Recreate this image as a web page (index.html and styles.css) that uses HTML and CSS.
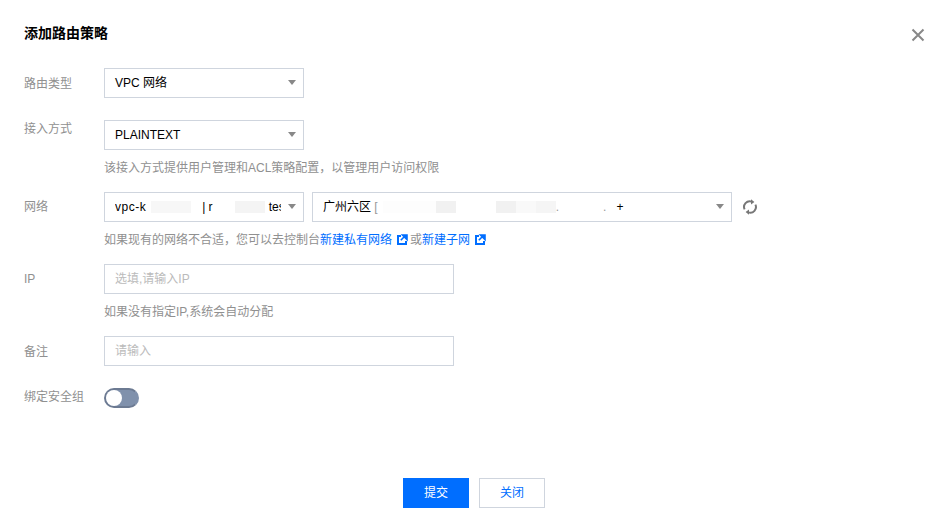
FILE: index.html
```html
<!DOCTYPE html>
<html lang="zh-CN">
<head>
<meta charset="utf-8">
<title>添加路由策略</title>
<link rel="stylesheet" href="styles.css">
</head>
<body>
<div class="dialog">
  <header class="head">
    <h1 class="title">添加路由策略</h1>
    <svg class="close" width="14" height="14" viewBox="0 0 14 14"><path d="M1.5 1.5l11 11M12.5 1.5l-11 11" stroke="#888" stroke-width="2" fill="none"/></svg>
  </header>
  <form class="form">
    <div class="row">
      <div class="label label-low">路由类型</div>
      <div class="body">
        <div class="select w200"><span class="val">VPC 网络</span><i class="arrow"></i></div>
      </div>
    </div>
    <div class="row has-help">
      <div class="label label-top">接入方式</div>
      <div class="body">
        <div class="select w200"><span class="val">PLAINTEXT</span><i class="arrow"></i></div>
        <p class="help">该接入方式提供用户管理和ACL策略配置，以管理用户访问权限</p>
      </div>
    </div>
    <div class="row has-help">
      <div class="label">网络</div>
      <div class="body">
        <div class="net">
          <div class="select w200">
            <span class="val clip"><span class="wide">vpc-k</span><b class="blur b1"></b><b class="gap g1"></b>| r<b class="gap g2"></b><b class="blur b2"></b><b class="gap g3"></b>tes</span><i class="arrow"></i>
          </div>
          <div class="select w420">
            <span class="val">广州六区 <span class="faint">[</span><b class="blur b3"></b><b class="blur b4"></b><b class="gap g4"></b><b class="blur b5"></b><b class="blur b6"></b><b class="blur b7"></b><span class="faint">.</span><b class="gap g5"></b><span class="faint">.</span><b class="gap g6"></b>+</span><i class="arrow"></i>
          </div>
          <svg class="refresh" width="16" height="16" viewBox="0 0 16 16"><g fill="none" stroke="#777" stroke-width="2"><path d="M2.6 10.4A5.7 5.7 0 0 1 9.6 2.6"/><path d="M13.4 5.6A5.7 5.7 0 0 1 6.4 13.4"/></g><path d="M9 .3l3.4 2.7L9 5.4zM7 10.6L3.6 13 7 15.7z" fill="#777"/></svg>
        </div>
        <p class="help">如果现有的网络不合适，您可以去控制台<a class="link">新建私有网络<svg class="ext" width="12" height="12" viewBox="0 0 12 12"><path d="M5 2H2v8h8V7" fill="none" stroke="#006eff" stroke-width="2"/><path d="M6.5 1H11v4.5zM8.5 2.5L4.8 6.2" fill="#006eff" stroke="#006eff" stroke-width="1.6"/></svg></a>或<a class="link">新建子网<svg class="ext" width="12" height="12" viewBox="0 0 12 12"><path d="M5 2H2v8h8V7" fill="none" stroke="#006eff" stroke-width="2"/><path d="M6.5 1H11v4.5zM8.5 2.5L4.8 6.2" fill="#006eff" stroke="#006eff" stroke-width="1.6"/></svg></a></p>
      </div>
    </div>
    <div class="row has-help">
      <div class="label">IP</div>
      <div class="body">
        <input class="input" type="text" placeholder="选填,请输入IP">
        <p class="help">如果没有指定IP,系统会自动分配</p>
      </div>
    </div>
    <div class="row">
      <div class="label label-low">备注</div>
      <div class="body">
        <input class="input" type="text" placeholder="请输入">
      </div>
    </div>
    <div class="row">
      <div class="label label-switch">绑定安全组</div>
      <div class="body">
        <div class="switch"><i class="knob"></i></div>
      </div>
    </div>
  </form>
  <footer class="foot">
    <button class="btn primary" type="button">提交</button>
    <button class="btn" type="button">关闭</button>
  </footer>
</div>
</body>
</html>
```
FILE: styles.css
```css
* { box-sizing: border-box; }
html, body { margin: 0; padding: 0; background: #fff; }
body {
  font-family: "Liberation Sans", "Noto Sans CJK SC", sans-serif;
  font-size: 12px;
  line-height: 18px;
  color: #000;
}
.dialog { width: 946px; height: 529px; overflow: hidden; }
.head {
  display: flex;
  justify-content: space-between;
  align-items: flex-start;
  padding: 23px 21px 25px 24px;
}
.title { margin: 0; font-size: 14px; line-height: 20px; font-weight: 700; color: #000; }
.close { margin-top: 5px; display: block; }
.form { padding-left: 24px; }
.row { display: flex; margin-bottom: 22px; }
.row.has-help { margin-bottom: 15px; }
.label { width: 80px; flex: none; padding-top: 6px; color: #909090; }
.label-low { padding-top: 7px; }
.label-top { padding-top: 0; }
.label-switch { padding-top: 0; }
.body { flex: 1; min-width: 0; }
.select {
  display: flex;
  align-items: center;
  justify-content: space-between;
  height: 30px;
  padding: 0 7px 0 10px;
  border: 1px solid #cfd5de;
  background: #fff;
}
.w200 { width: 200px; }
.w420 { width: 420px; }
.val { display: flex; align-items: center; white-space: pre; }
.wide { letter-spacing: .5px; }
.faint { color: #999; }
.clip { width: 166px; overflow: hidden; }
.arrow {
  width: 0;
  height: 0;
  flex: none;
  margin-top: -1px;
  border-style: solid;
  border-width: 5px 4.5px 0;
  border-color: #888 transparent transparent;
}
.net { display: flex; align-items: center; gap: 8px; }
.refresh { display: block; margin-left: 2px; }
.blur { display: block; height: 12px; flex: none; }
.gap { display: block; flex: none; }
.b1 { width: 40px; margin-left: 5px; background: #f7f7f7; }
.g1 { width: 11px; }
.g2 { width: 22px; }
.b2 { width: 30px; background: #f4f4f4; }
.g3 { width: 4px; }
.b3 { width: 53px; margin-left: 5px; background: #fdfdfd; }
.b4 { width: 20px; background: #f1f1f1; }
.g4 { width: 40px; }
.b5 { width: 20px; background: #f1f1f1; }
.b6 { width: 20px; background: #f9f9f9; }
.b7 { width: 20px; background: #f5f5f5; }
.g5 { width: 44px; }
.g6 { width: 10px; }
.help { margin: 9px 0 0; color: #909090; white-space: nowrap; }
.link { color: #006eff; }
.ext { display: inline-block; vertical-align: -2px; margin: 0 2px 0 4px; }
.input {
  display: block;
  width: 350px;
  height: 30px;
  padding: 0 10px;
  border: 1px solid #cfd5de;
  border-radius: 0;
  outline: 0;
  background: #fff;
  font: inherit;
  color: #000;
}
.input::placeholder { color: #bbb; opacity: 1; }
.switch {
  position: relative;
  width: 35px;
  height: 20px;
  border-radius: 10px;
  background: #8091ac;
  border: 2px solid;
  border-color: #6c7a92 #8091ac #6c7a92 #6c7a92;
}
.knob {
  position: absolute;
  left: 0;
  top: 0;
  width: 16px;
  height: 16px;
  border-radius: 50%;
  background: #fff;
}
.foot { display: flex; justify-content: center; gap: 10px; margin-top: 70px; padding-left: 2px; }
.btn {
  width: 66px;
  height: 30px;
  padding: 0;
  border: 1px solid #cfd5de;
  border-radius: 0;
  background: #fff;
  color: #006eff;
  font: inherit;
}
.btn.primary { border-color: #006eff; background: #006eff; color: #fff; }
```
